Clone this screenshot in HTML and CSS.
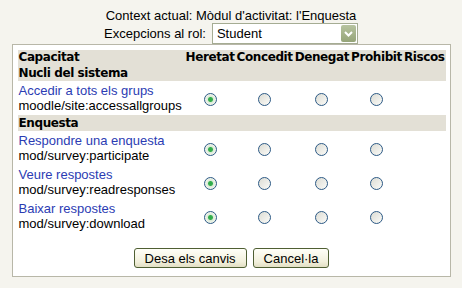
FILE: index.html
```html
<!DOCTYPE html>
<html lang="ca">
<head>
  <meta charset="UTF-8">
  <meta name="viewport" content="width=device-width, initial-scale=1.0">
  <title>Excepcions al rol</title>
  <link rel="stylesheet" href="styles.css">
</head>
<body>
  <div class="context">Context actual: Mòdul d'activitat: l'Enquesta</div>
  <form id="overrideForm">
    <div class="role-row">
      <label for="roleid">Excepcions al rol:</label>
      <span class="select-wrap">
        <select id="roleid" name="roleid" class="role-select">
          <option>Student</option>
        </select>
        <span class="select-arrow">
          <svg width="15" height="17" viewBox="0 0 15 17">
            <path d="M4 7 L7.5 10.5 L11 7" fill="none" stroke="#fff" stroke-width="2"/>
          </svg>
        </span>
      </span>
    </div>
    <div class="box">
      <table class="caps">
        <tr class="head">
          <th class="name">Capacitat</th>
          <th>Heretat</th>
          <th>Concedit</th>
          <th>Denegat</th>
          <th>Prohibit</th>
          <th>Riscos</th>
        </tr>
        <tr class="section">
          <td colspan="6">Nucli del sistema</td>
        </tr>
        <tr class="cap">
          <td class="name"><a href="#">Accedir a tots els grups</a><br>moodle/site:accessallgroups</td>
          <td><input type="radio" name="c1" checked></td>
          <td><input type="radio" name="c1"></td>
          <td><input type="radio" name="c1"></td>
          <td><input type="radio" name="c1"></td>
          <td></td>
        </tr>
        <tr class="section">
          <td colspan="6">Enquesta</td>
        </tr>
        <tr class="cap">
          <td class="name"><a href="#">Respondre una enquesta</a><br>mod/survey:participate</td>
          <td><input type="radio" name="c2" checked></td>
          <td><input type="radio" name="c2"></td>
          <td><input type="radio" name="c2"></td>
          <td><input type="radio" name="c2"></td>
          <td></td>
        </tr>
        <tr class="cap">
          <td class="name"><a href="#">Veure respostes</a><br>mod/survey:readresponses</td>
          <td><input type="radio" name="c3" checked></td>
          <td><input type="radio" name="c3"></td>
          <td><input type="radio" name="c3"></td>
          <td><input type="radio" name="c3"></td>
          <td></td>
        </tr>
        <tr class="cap">
          <td class="name"><a href="#">Baixar respostes</a><br>mod/survey:download</td>
          <td><input type="radio" name="c4" checked></td>
          <td><input type="radio" name="c4"></td>
          <td><input type="radio" name="c4"></td>
          <td><input type="radio" name="c4"></td>
          <td></td>
        </tr>
      </table>
      <div class="buttons">
        <button type="submit">Desa els canvis</button>
        <button type="button">Cancel·la</button>
      </div>
    </div>
  </form>
</body>
</html>
```

FILE: styles.css
```css
body {
  font-family: "Liberation Sans", Arial, sans-serif;
  font-size: 13px;
  color: #000;
  background-color: #f5f4ee;
  margin: 0;
}

.context {
  text-align: center;
  padding-top: 8px;
  line-height: 15px;
}

.role-row {
  display: flex;
  justify-content: center;
  align-items: center;
  gap: 6px;
  height: 21px;
}

.select-wrap {
  position: relative;
  display: inline-block;
}

.role-select {
  appearance: none;
  -webkit-appearance: none;
  width: 146px;
  height: 21px;
  margin: 0;
  padding: 0 0 0 4px;
  border: 1px solid #a5ac93;
  background: #fff;
  font-family: "Liberation Sans", Arial, sans-serif;
  font-size: 13px;
  color: #000;
  border-radius: 0;
}

.select-arrow {
  position: absolute;
  top: 2px;
  right: 2px;
  width: 15px;
  height: 17px;
  border-radius: 2px;
  background: linear-gradient(#b7c3a0, #95a478);
  display: flex;
  pointer-events: none;
}

.box {
  box-sizing: border-box;
  width: 439px;
  margin: 0 auto;
  background: #fff;
  border: 1px solid #b8b7a8;
  padding: 5px 4px 8px 5px;
}

.caps {
  width: 428px;
  border-collapse: collapse;
}

.caps th,
.caps td {
  padding: 0 1px;
}

.caps th,
.section td {
  font-family: "DejaVu Sans", Verdana, sans-serif;
  font-weight: bold;
  font-size: 12px;
  letter-spacing: -0.4px;
  background: #e3e0d6;
  text-align: left;
}

.caps th {
  line-height: 15px;
  white-space: nowrap;
}

.section td {
  line-height: 16px;
}

.cap td {
  height: 34px;
  padding: 0 1px;
  line-height: 15px;
  text-align: center;
  vertical-align: middle;
}

.cap td.name {
  text-align: left;
  width: 100%;
}

a {
  color: #2b3cb3;
  text-decoration: none;
}

input[type="radio"] {
  appearance: none;
  -webkit-appearance: none;
  width: 13px;
  height: 13px;
  margin: 0;
  border: 1px solid #2d5a86;
  border-radius: 50%;
  background: linear-gradient(135deg, #dcdcd4, #fbfbf8);
  vertical-align: middle;
}

input[type="radio"]:checked {
  background: radial-gradient(circle, #2ea84a 0, #35b04e 2px, #dcebd8 3px, #f7f7f2 6px);
}

.buttons {
  display: flex;
  justify-content: center;
  gap: 6px;
  margin-top: 15px;
}

button {
  height: 20px;
  padding: 0 10px;
  font-family: "Liberation Sans", Arial, sans-serif;
  font-size: 13px;
  color: #000;
  border: 1px solid #4f5f33;
  border-radius: 3px;
  background: linear-gradient(#fffff8, #f2f0dc 70%, #e2dfc4);
  cursor: pointer;
}
```
